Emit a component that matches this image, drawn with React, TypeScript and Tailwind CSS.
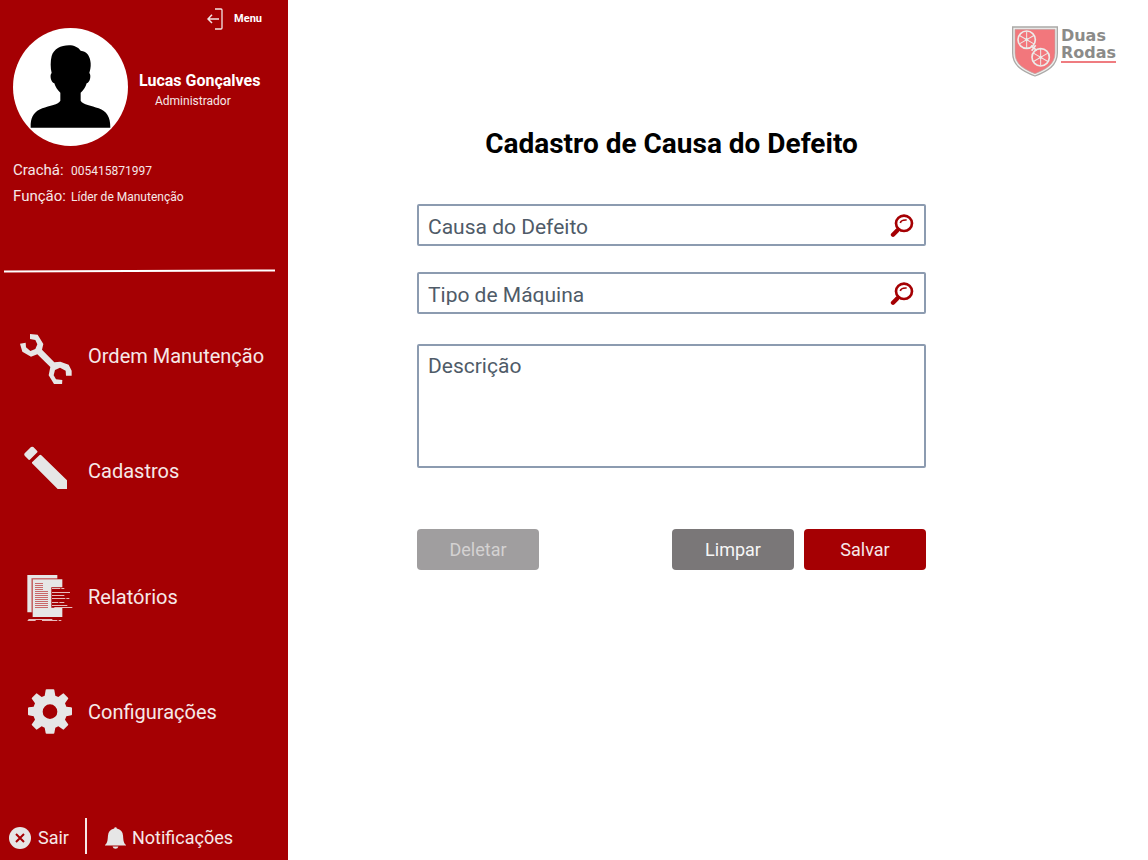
import type { InputHTMLAttributes, ReactNode } from "react";

const wheelSpokes = [0, 60, 120];

function MenuIcon() {
  return (
    <svg className="h-[22px] w-4" viewBox="0 0 16 22" fill="none" stroke="#f3e4e4" aria-hidden="true">
      <path d="M8 1h6q1 0 1 1v18q0 1-1 1H8" strokeWidth="1.3" />
      <path d="M1 11h11M5 6.8 1 11l4 4" strokeWidth="1.5" />
    </svg>
  );
}

function Avatar() {
  return (
    <svg className="h-[118px] w-[115px] shrink-0" viewBox="39 84 345 354" role="img" aria-label="Foto de perfil">
      <ellipse cx="211.500" cy="261" rx="172.500" ry="177" fill="#fff" />
      <path
        d="M92 383V372C94 348 104 334 127 325C148 316 176 314 181 302V278C172 271 166 260 163 250C153 248 148 225 155 219C151 204 151 183 155 168C161 148 182 136 207 136C222 136 235 142 242 152C262 153 271 171 272 190C273 202 270 212 268 219C274 225 271 247 260 250C257 262 250 271 242 278V302C249 315 274 316 296 325C320 334 331 350 331 383Z"
        fill="#000"
      />
    </svg>
  );
}

function WrenchIcon() {
  return (
    <svg className="size-14 shrink-0" viewBox="54 24 168 168" fill="#e6e6e6" aria-hidden="true">
      <path d="M60 71 77 68 78 82 91 93 106 87 112 73 106 60 90 57V42L113 44 130 72 126 89 163 127 181 125 206 134 215 152V167H198L197 152 180 143 165 150 161 166 168 178 187 180 186 195 162 192 146 166 151 141 112 103 93 110 67 95Z" />
    </svg>
  );
}

function PencilIcon() {
  return (
    <svg className="size-14 shrink-0" viewBox="54 369 168 168" fill="#e6e6e6" aria-hidden="true">
      <path d="M74 400Q71 403 74 407L86 419Q88 421 91 418L112 397Q114 395 111 392L100 381Q97 379 93 381ZM96 427 119 405Q121 403 124 406L201 481V507H173L96 430Z" />
    </svg>
  );
}

function ReportIcon() {
  return (
    <svg className="size-14 shrink-0" viewBox="54 27 168 168" aria-hidden="true">
      <path fill="#e6e6e6" d="M82 45H172V55H95V157H82ZM98 58H187V82H154V143H187V171H98Z" />
      <path stroke="#dc9c9e" strokeWidth="2" fill="none" d="M96 157V56H172" />
      <path
        stroke="#c9686b"
        strokeWidth="3"
        d="M105 70.500H129M105 76.500H129M105 82.500H129M105 88.500H129M105 94.500H144M105 100.500H144M105 106.500H144M105 112.500H144M105 118.500H144M105 124.500H144M105 130.500H144M105 136.500H144M105 142.500H144"
      />
      <path
        stroke="#e8bcbd"
        strokeWidth="3"
        d="M156 85.500H181M184 85.500H193M156 97.500H210M156 106.500H193M156 115.500H196M199 115.500H208M156 127.500H175M178 127.500H193M156 136.500H202M163 142.500H217M85 178.500H157M83 181.500H107M126 181.500H172M176 181.500H184"
      />
    </svg>
  );
}

function GearIcon() {
  return (
    <svg className="size-14 shrink-0" viewBox="54 372 168 168" aria-hidden="true">
      <path
        fill="#e6e6e6"
        fillRule="evenodd"
        d="M137 390Q137 388 140 388H160Q163 388 163 390L166 407 175 411 188 401Q190 399 192 401L204 413Q206 415 204 417L195 430 199 440 214 442Q216 443 216 445V463Q216 466 214 466L199 469 195 479 204 492Q206 494 204 496L192 508Q190 510 188 508L175 499 166 503 163 519Q163 521 160 521H140Q137 521 137 519L134 503 125 499 112 508Q110 510 108 508L96 496Q94 494 96 492L105 479 101 469 86 466Q84 466 84 463V445Q84 443 86 442L101 440 105 430 96 417Q94 415 96 413L108 401Q110 399 112 401L125 411 134 407ZM150 433A22 22 0 1 0 150 477A22 22 0 1 0 150 433Z"
      />
    </svg>
  );
}

function ExitIcon() {
  return (
    <svg className="size-[22px]" viewBox="0 0 22 22" aria-hidden="true">
      <circle cx="11" cy="11" r="11" fill="#e6e6e6" />
      <path d="M7 7l8 8M15 7l-8 8" stroke="#a50003" strokeWidth="2" />
    </svg>
  );
}

function BellIcon() {
  return (
    <svg className="h-[22px] w-[21px]" viewBox="314 80 64 66" fill="#e6e6e6" aria-hidden="true">
      <path d="M342 84Q342 80 346 80Q350 80 350 84Q368 88 369 106C370 122 371 128 378 134V136H314V134C321 128 322 122 323 106Q324 88 342 84ZM337 139H355Q353 146 346 146Q339 146 337 139Z" />
    </svg>
  );
}

function SearchIcon() {
  return (
    <svg className="h-[27px] w-7" viewBox="149 66 84 81" fill="none" stroke="#a50003" aria-hidden="true">
      <ellipse cx="191" cy="100" rx="24" ry="23" strokeWidth="8" />
      <path d="M180 99Q182 89 199 90" strokeWidth="5" />
      <path d="M177 115 168 123" strokeWidth="9" />
      <path d="M170 122 158 134" strokeWidth="13" strokeLinecap="round" />
    </svg>
  );
}

function Wheel({ cx, cy }: { cx: number; cy: number }) {
  return (
    <g transform={`translate(${cx} ${cy})`} stroke="#ececea" fill="none">
      <circle r="26" strokeWidth="5" />
      {wheelSpokes.map((angle) => (
        <path key={angle} d="M0-25V25" strokeWidth="3" transform={`rotate(${angle})`} />
      ))}
      <circle r="4" fill="#ececea" />
    </g>
  );
}

function Logo() {
  return (
    <a href="#" aria-label="Duas Rodas" className="flex items-start gap-[3px]">
      <svg className="h-[51px] w-[46px]" viewBox="36 35 138 153" aria-hidden="true">
        <path d="M38 38H172V116C172 154 142 171 105 185C68 171 38 154 38 116Z" fill="#efefed" stroke="#aaa9a7" strokeWidth="4" />
        <path d="M45 45H165V116C165 150 137 165 105 178C73 165 45 150 45 116Z" fill="#f2777c" stroke="#b9a9a7" strokeWidth="2" />
        <Wheel cx={80} cy={76} />
        <Wheel cx={122} cy={129} />
        <path d="M93 94 110 108M107 93 95 109" stroke="#ececea" strokeWidth="5" />
      </svg>
      <span className="border-b-2 border-[#ef7c80] font-['DejaVu_Sans',sans-serif] text-[16px] leading-[17px] font-bold text-[#8b8b89]">
        <span className="block pt-[1px]">Duas</span>
        <span className="block">Rodas</span>
      </span>
    </a>
  );
}

function NavItem({ icon, label }: { icon: ReactNode; label: string }) {
  return (
    <a href="#" className="flex items-center gap-[14px] pl-[18px] text-[20px] text-[#f6e8e8]">
      {icon}
      <span>{label}</span>
    </a>
  );
}

function SearchField({ label, ...rest }: { label: string } & InputHTMLAttributes<HTMLInputElement>) {
  return (
    <div className="flex h-[42px] items-center rounded-[2px] border-2 border-[#8c9bb0] pr-[6px]">
      <input
        type="text"
        aria-label={label}
        placeholder={label}
        className="mt-1 h-5 min-w-0 flex-1 bg-transparent pl-[9px] text-[21px] leading-5 text-[#4f5b68] outline-none placeholder:text-[#4f5b68] placeholder:opacity-100"
        {...rest}
      />
      <button type="button" aria-label={`Pesquisar ${label}`}>
        <SearchIcon />
      </button>
    </div>
  );
}

export default function App() {
  return (
    <div className="flex min-h-screen bg-white font-['Roboto',sans-serif]">
      <aside className="flex w-72 shrink-0 flex-col bg-[#a50003] text-[#f6e8e8]">
        <div className="flex h-7 justify-end pt-2 pr-[26px]">
          <button type="button" className="flex h-[22px] items-center gap-[11px] text-[11px] font-bold text-white">
            <MenuIcon />
            Menu
          </button>
        </div>

        <div className="flex gap-[11px] pl-[13px]">
          <Avatar />
          <div className="pt-[43px]">
            <p className="text-[16px] leading-5 font-bold text-white">Lucas Gonçalves</p>
            <p className="pl-4 text-[12px] leading-5">Administrador</p>
          </div>
        </div>

        <dl className="grid grid-cols-[58px_1fr] items-baseline pt-[11px] pl-[13px]">
          <dt className="text-[15px] leading-[26px]">Crachá:</dt>
          <dd className="text-[12px] leading-5">005415871997</dd>
          <dt className="text-[15px] leading-[26px]">Função:</dt>
          <dd className="text-[12px] leading-5">Líder de Manutenção</dd>
        </dl>

        <svg className="mt-[60px] ml-1 h-1 w-[271px]" viewBox="0 0 271 4" aria-hidden="true">
          <path d="M0 2.500 271 1.500" stroke="#fff" strokeWidth="2" />
        </svg>

        <nav aria-label="Principal" className="flex flex-col pt-[55px]">
          <NavItem icon={<WrenchIcon />} label="Ordem Manutenção" />
          <div className="pt-[59px]">
            <NavItem icon={<PencilIcon />} label="Cadastros" />
          </div>
          <div className="pt-[70px]">
            <NavItem icon={<ReportIcon />} label="Relatórios" />
          </div>
          <div className="pt-[59px]">
            <NavItem icon={<GearIcon />} label="Configurações" />
          </div>
        </nav>

        <div className="mt-auto flex h-[42px] items-start pl-[9px] text-[18px]">
          <a href="#" className="flex h-9 items-center gap-[7px] border-r-2 border-[#f6e8e8] pt-[3px] pr-4">
            <ExitIcon />
            Sair
          </a>
          <a href="#" className="flex h-9 items-center gap-[6px] pt-[3px] pl-[18px]">
            <BellIcon />
            Notificações
          </a>
        </div>
      </aside>

      <main className="min-w-0 flex-1">
        <header className="flex justify-end pt-[26px] pr-8">
          <Logo />
        </header>

        <form className="ml-[129px] max-w-[509px] pt-[47px]" onSubmit={(event) => event.preventDefault()}>
          <h1 className="text-center text-[28px] leading-10 font-bold text-black">Cadastro de Causa do Defeito</h1>

          <div className="flex flex-col gap-[26px] pt-[40px]">
            <SearchField label="Causa do Defeito" name="causa" />
            <SearchField label="Tipo de Máquina" name="tipo" />
          </div>

          <textarea
            name="descricao"
            aria-label="Descrição"
            placeholder="Descrição"
            className="mt-[30px] block h-[124px] w-full resize-none rounded-[2px] border-2 border-[#8c9bb0] px-[9px] pt-1 text-[21px] leading-8 text-[#4f5b68] outline-none placeholder:text-[#4f5b68] placeholder:opacity-100"
          />

          <div className="flex gap-[10px] pt-[61px] text-[18px]">
            <button type="button" disabled className="mr-auto h-[41px] w-[122px] rounded bg-[#a09e9f] text-[#d4d2d2]">
              Deletar
            </button>
            <button type="reset" className="h-[41px] w-[122px] rounded bg-[#7a7778] text-[#f6f6f6]">
              Limpar
            </button>
            <button type="submit" className="h-[41px] w-[122px] rounded bg-[#a50003] text-[#f6e8e8]">
              Salvar
            </button>
          </div>
        </form>
      </main>
    </div>
  );
}
